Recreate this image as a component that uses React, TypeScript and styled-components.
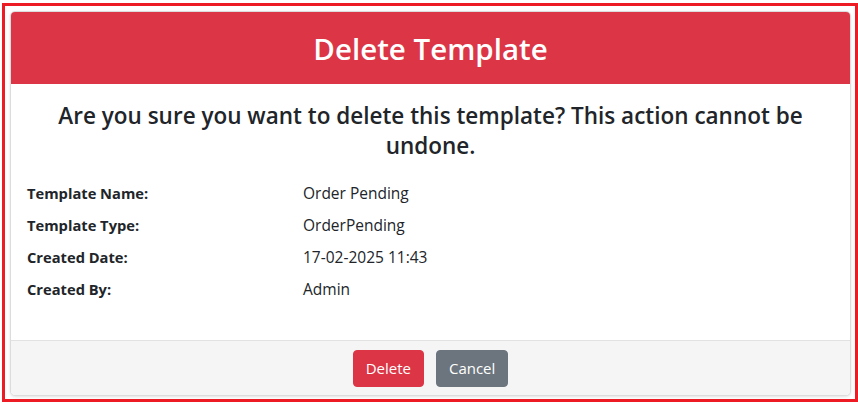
import React from "react";
import styled, { createGlobalStyle } from "styled-components";

const GlobalStyle = createGlobalStyle`
  html, body {
    margin: 0;
    padding: 0;
    background: #ffffff;
  }
  body {
    font-family: "Open Sans", "Noto Sans", "Liberation Sans", sans-serif;
    color: #212529;
  }
`;

const Frame = styled.div`
  box-sizing: border-box;
  margin: 3px 0 0 2px;
  width: 856px;
  height: 399px;
  border: 3px solid #ed1c24;
  padding: 5px 4px 3px 5px;
  display: flex;
`;

const Modal = styled.div`
  flex: 1;
  display: flex;
  flex-direction: column;
  background: #ffffff;
  border: 1px solid #dcdcdc;
  border-radius: 5px;
  overflow: hidden;
  box-shadow: 0 1px 3px rgba(0, 0, 0, 0.12);
`;

const Header = styled.div`
  background: #dc3545;
  color: #ffffff;
  height: 72px;
  display: flex;
  align-items: center;
  justify-content: center;
`;

const Title = styled.h3`
  margin: 2px 0 0 0;
  font-size: 29.5px;
  font-weight: 600;
  line-height: 36px;
`;

const Body = styled.div`
  flex: 1;
  padding: 17px 16px 0 16px;
`;

const Question = styled.h4`
  margin: 0 0 20px 0;
  text-align: center;
  font-size: 22.5px;
  font-weight: 600;
  line-height: 30px;
`;

const DetailGrid = styled.dl`
  margin: 0;
  display: grid;
  grid-template-columns: 276px 1fr;
  row-gap: 8px;
`;

const Label = styled.dt`
  font-size: 14.7px;
  font-weight: 700;
  line-height: 24px;
`;

const Value = styled.dd`
  margin: 0;
  font-size: 15.5px;
  line-height: 24px;
`;

const Footer = styled.div`
  background: #f5f5f5;
  border-top: 1px solid #e2e2e2;
  height: 54px;
  display: flex;
  align-items: center;
  justify-content: center;
  gap: 12px;
`;

const Button = styled.button<{ $variant: "danger" | "secondary" }>`
  font-family: inherit;
  font-size: 15px;
  line-height: 24px;
  height: 37px;
  padding: 0 12px;
  border-radius: 4px;
  border: 1px solid
    ${(p) => (p.$variant === "danger" ? "#dc3545" : "#6c757d")};
  background: ${(p) => (p.$variant === "danger" ? "#dc3545" : "#6c757d")};
  color: #ffffff;
  cursor: pointer;
`;

const details = [
  { label: "Template Name:", value: "Order Pending" },
  { label: "Template Type:", value: "OrderPending" },
  { label: "Created Date:", value: "17-02-2025 11:43" },
  { label: "Created By:", value: "Admin" },
];

const App: React.FC = () => {
  return (
    <>
      <GlobalStyle />
      <Frame>
        <Modal>
          <Header>
            <Title>Delete Template</Title>
          </Header>
          <Body>
            <Question>
              Are you sure you want to delete this template? This action cannot
              be undone.
            </Question>
            <DetailGrid>
              {details.map((d) => (
                <React.Fragment key={d.label}>
                  <Label>{d.label}</Label>
                  <Value>{d.value}</Value>
                </React.Fragment>
              ))}
            </DetailGrid>
          </Body>
          <Footer>
            <Button $variant="danger">Delete</Button>
            <Button $variant="secondary">Cancel</Button>
          </Footer>
        </Modal>
      </Frame>
    </>
  );
};

export default App;
